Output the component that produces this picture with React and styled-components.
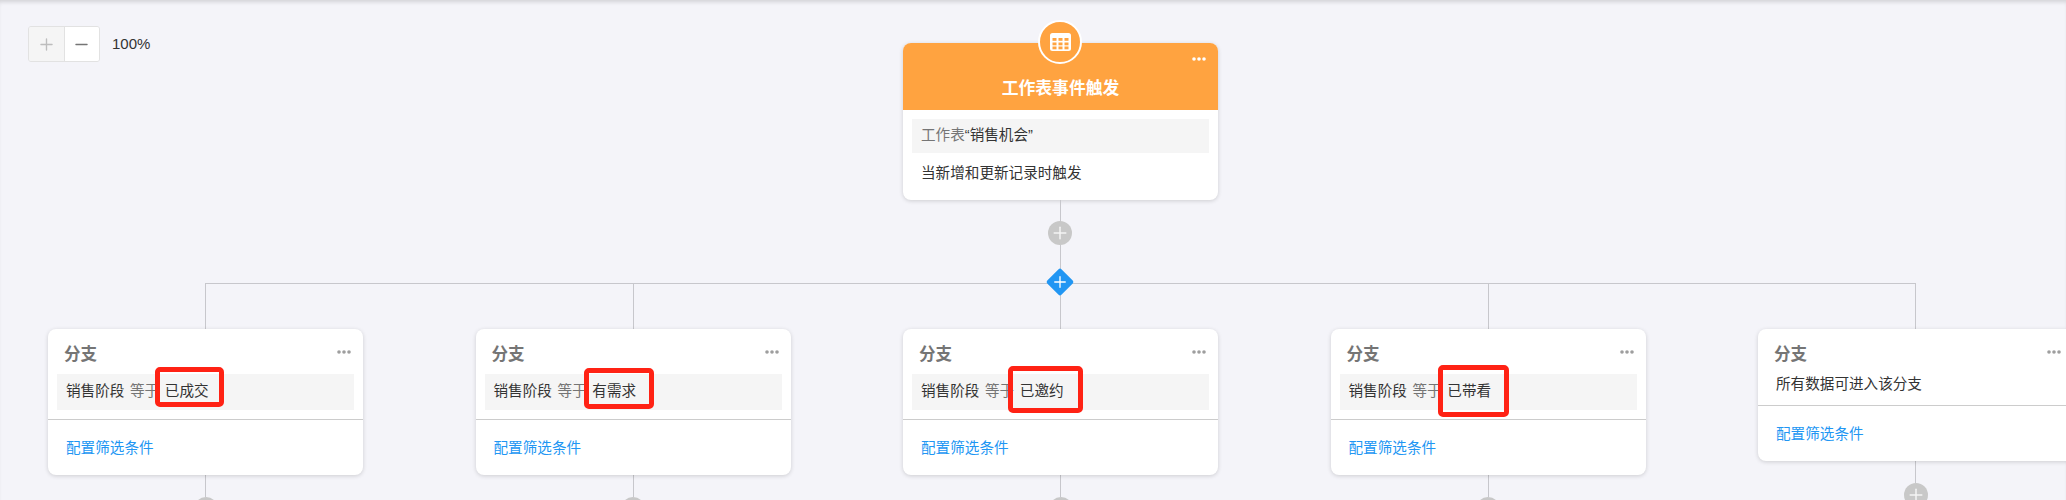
import React from 'react';
import styled, { createGlobalStyle } from 'styled-components';
import { Plus, Minus } from 'lucide-react';

const GlobalStyle = createGlobalStyle`
  html, body {
    margin: 0;
    padding: 0;
    background: #f4f4f9;
  }
  body {
    font-family: "Liberation Sans", "Noto Sans CJK SC", sans-serif;
    color: #333;
  }
`;

const LINE = '#c7c7cc';

const Canvas = styled.div`
  position: relative;
  width: 2066px;
  height: 500px;
  box-sizing: border-box;
  padding: 43px 0 0 48px;
  overflow: hidden;
  background: #f4f4f9;
  box-shadow: inset 0 4px 4px -2px rgba(0, 0, 0, 0.14);
`;

// zoom control floats over the canvas
const ZoomBar = styled.div`
  position: absolute;
  left: 28px;
  top: 26px;
  display: flex;
  align-items: center;
`;

const ZoomButtons = styled.div`
  display: flex;
  width: 72px;
  height: 36px;
  box-sizing: border-box;
  border: 1px solid #e2e2e2;
  border-radius: 3px;
  overflow: hidden;
`;

const ZoomButton = styled.div`
  flex: 1;
  display: flex;
  align-items: center;
  justify-content: center;
  background: ${p => (p.$disabled ? '#f5f5f5' : '#fff')};
  color: ${p => (p.$disabled ? '#bdbdbd' : '#757575')};
  & + & {
    border-left: 1px solid #e2e2e2;
  }
`;

const ZoomLabel = styled.span`
  margin-left: 12px;
  font-size: 15px;
  line-height: 36px;
  color: #333;
`;

const Flow = styled.div`
  width: 2025px;
  display: flex;
  flex-direction: column;
  align-items: center;
`;

const Card = styled.div`
  position: relative;
  width: 315px;
  box-sizing: border-box;
  background: #fff;
  border-radius: 8px;
  box-shadow: 0 1px 4px rgba(0, 0, 0, 0.16);
`;

const TriggerHead = styled.div`
  height: 67px;
  box-sizing: border-box;
  padding-top: 34px;
  background: #ffa340;
  border-radius: 8px 8px 0 0;
  color: #fff;
  font-size: 16.8px;
  font-weight: 700;
  line-height: 24px;
  text-align: center;
`;

const TriggerIcon = styled.div`
  position: absolute;
  left: 135px;
  top: -23px;
  width: 44px;
  height: 44px;
  box-sizing: border-box;
  display: flex;
  align-items: center;
  justify-content: center;
  background: #ffa340;
  border: 2px solid #fff;
  border-radius: 50%;
`;

const MoreDots = styled.svg`
  position: absolute;
  right: 12px;
  top: ${p => p.$top}px;
  width: 14px;
  height: 4px;
  fill: ${p => p.$color};
`;

const TriggerBody = styled.div`
  height: 90px;
  box-sizing: border-box;
  padding: 9px 9px 0;
`;

const SheetName = styled.div`
  height: 34px;
  padding-left: 9px;
  background: #f5f5f5;
  font-size: 14.6px;
  line-height: 32px;
  color: #333;
`;

const Muted = styled.span`
  color: #757575;
`;

const TriggerNote = styled.div`
  margin-top: 8px;
  padding-left: 9px;
  font-size: 14.6px;
  line-height: 24px;
  color: #333;
`;

const Trunk = styled.div`
  position: relative;
  flex: none;
  width: 1px;
  height: 83px;
  background: ${LINE};
`;

const PlusCircle = styled.div`
  flex: none;
  width: 24px;
  height: 24px;
  border-radius: 50%;
  display: flex;
  align-items: center;
  justify-content: center;
  background: #c8c8c8;
  color: #f4f4f4;
`;

const TrunkPlus = styled(PlusCircle)`
  position: absolute;
  left: -12px;
  top: 21px;
`;

const Diamond = styled.div`
  position: absolute;
  left: -10px;
  bottom: -9px;
  width: 20px;
  height: 20px;
  display: flex;
  align-items: center;
  justify-content: center;
  background: #2196f3;
  border-radius: 2px;
  color: #fff;
  transform: rotate(45deg);
  svg {
    transform: rotate(-45deg);
  }
`;

const Rail = styled.div`
  align-self: stretch;
  flex: none;
  height: 1px;
  margin: 0 157px;
  background: ${LINE};
`;

const BranchRow = styled.div`
  display: flex;
  gap: 112.5px;
`;

const BranchColumn = styled.div`
  display: flex;
  flex-direction: column;
  align-items: center;
  width: 315px;
`;

const Stem = styled.div`
  flex: none;
  width: 1px;
  height: ${p => p.$height}px;
  background: ${LINE};
`;

const BranchTitle = styled.div`
  height: 45px;
  box-sizing: border-box;
  padding: 14px 0 0 16px;
  font-size: 16.6px;
  font-weight: 700;
  line-height: 24px;
  color: #757575;
`;

const Condition = styled.div`
  display: flex;
  gap: 5.6px;
  margin: 0 9px 9px;
  padding-left: 9px;
  height: ${p => (p.$plain ? 22 : 36)}px;
  background: ${p => (p.$plain ? 'transparent' : '#f5f5f5')};
  font-size: 14.6px;
  line-height: ${p => (p.$plain ? 20 : 34)}px;
  color: #333;
`;

const CardFooter = styled.div`
  height: 56px;
  box-sizing: border-box;
  padding-left: 18px;
  border-top: 1px solid #ccc;
  font-size: 14.6px;
  line-height: 56px;
  color: #2196f3;
`;

// red annotation drawn on top of the screenshot
const Highlight = styled.div`
  position: absolute;
  left: ${p => p.$left}px;
  top: ${p => p.$top}px;
  width: ${p => p.$w}px;
  height: ${p => p.$h}px;
  box-sizing: border-box;
  border: 5px solid #ff2214;
  border-radius: 5px;
`;

const Dots = ({ color, top }) => (
  <MoreDots viewBox="0 0 14 4" $color={color} $top={top}>
    <circle cx="2" cy="2" r="1.8" />
    <circle cx="7" cy="2" r="1.8" />
    <circle cx="12" cy="2" r="1.8" />
  </MoreDots>
);

const TableIcon = () => (
  <svg width="21" height="18" viewBox="0 0 21 18">
    <rect width="21" height="18" rx="2.5" fill="#fff" />
    {[5, 9.5, 13.5].map(y =>
      [2.5, 8.5, 14.5].map(x => (
        <rect key={`${x}-${y}`} x={x} y={y} width="4" height="2.8" fill="#ffa340" />
      ))
    )}
  </svg>
);

const branches = [
  { value: '已成交', box: { left: 107, top: 38, w: 69, h: 40 } },
  { value: '有需求', box: { left: 108, top: 39, w: 70, h: 41 } },
  { value: '已邀约', box: { left: 105, top: 37, w: 75, h: 47 } },
  { value: '已带看', box: { left: 107, top: 36, w: 71, h: 52 } },
  { plain: '所有数据可进入该分支' },
];

const Branch = ({ value, box, plain }) => (
  <BranchColumn>
    <Stem $height={45} />
    <Card>
      <Dots color="#9e9e9e" top={21} />
      <BranchTitle>分支</BranchTitle>
      {plain ? (
        <Condition $plain>{plain}</Condition>
      ) : (
        <Condition>
          <span>销售阶段</span>
          <Muted>等于</Muted>
          <span>{value}</span>
        </Condition>
      )}
      <CardFooter>配置筛选条件</CardFooter>
      {box && <Highlight $left={box.left} $top={box.top} $w={box.w} $h={box.h} />}
    </Card>
    <Stem $height={22} />
    <PlusCircle>
      <Plus size={20} strokeWidth={1.8} />
    </PlusCircle>
  </BranchColumn>
);

export default function App() {
  return (
    <>
      <GlobalStyle />
      <Canvas>
        <ZoomBar>
          <ZoomButtons>
            <ZoomButton $disabled>
              <Plus size={19} strokeWidth={1.7} />
            </ZoomButton>
            <ZoomButton>
              <Minus size={19} strokeWidth={1.7} />
            </ZoomButton>
          </ZoomButtons>
          <ZoomLabel>100%</ZoomLabel>
        </ZoomBar>

        <Flow>
          <Card>
            <TriggerIcon>
              <TableIcon />
            </TriggerIcon>
            <Dots color="#fff" top={14} />
            <TriggerHead>工作表事件触发</TriggerHead>
            <TriggerBody>
              <SheetName>
                <Muted>工作表</Muted>“销售机会”
              </SheetName>
              <TriggerNote>当新增和更新记录时触发</TriggerNote>
            </TriggerBody>
          </Card>

          <Trunk>
            <TrunkPlus>
              <Plus size={20} strokeWidth={1.8} />
            </TrunkPlus>
            <Diamond>
              <Plus size={18} strokeWidth={1.8} />
            </Diamond>
          </Trunk>
          <Rail />

          <BranchRow>
            {branches.map((b, i) => (
              <Branch key={i} {...b} />
            ))}
          </BranchRow>
        </Flow>
      </Canvas>
    </>
  );
}
